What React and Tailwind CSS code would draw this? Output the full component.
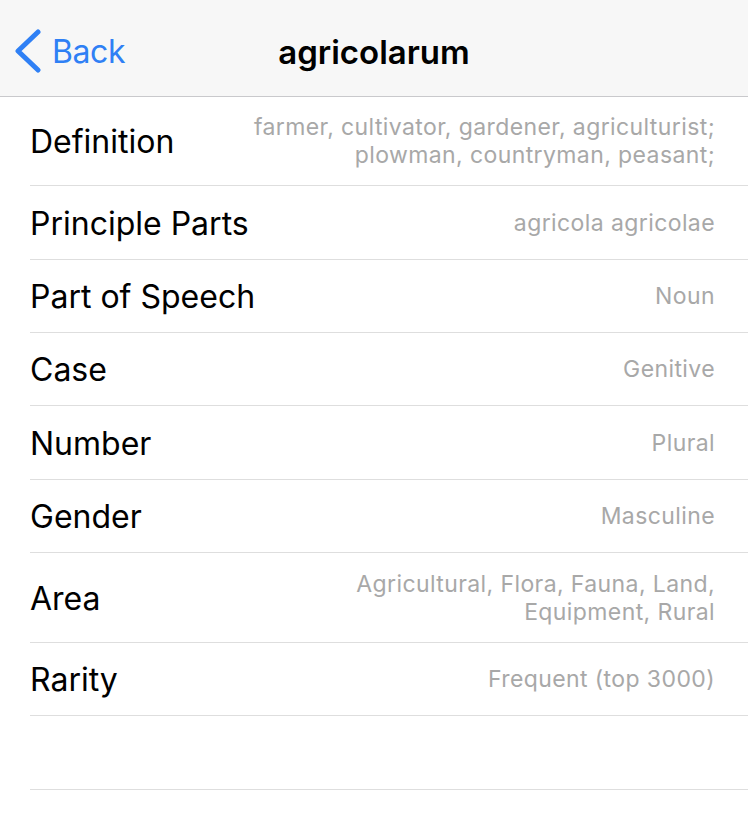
import React from "react";

const rows = [
  { label: "Definition", value: ["farmer, cultivator, gardener, agriculturist;", "plowman, countryman, peasant;"], h: "h-[89px]" },
  { label: "Principle Parts", value: ["agricola agricolae"], h: "h-[74px]" },
  { label: "Part of Speech", value: ["Noun"], h: "h-[73px]" },
  { label: "Case", value: ["Genitive"], h: "h-[73px]" },
  { label: "Number", value: ["Plural"], h: "h-[74px]" },
  { label: "Gender", value: ["Masculine"], h: "h-[73px]" },
  { label: "Area", value: ["Agricultural, Flora, Fauna, Land,", "Equipment, Rural"], h: "h-[90px]" },
  { label: "Rarity", value: ["Frequent (top 3000)"], h: "h-[73px]" },
  { label: "", value: [], h: "h-[74px]" },
];

export default function App() {
  return (
    <div className="w-[748px] h-[814px] bg-white overflow-hidden" style={{ fontFamily: "Inter, 'Noto Sans', sans-serif" }}>
      <div className="h-[97px] bg-[#f7f7f7] border-b border-[#c9c9cc] flex items-center relative">
        <div className="flex items-center pl-[14px] gap-[10px] text-[#2f80f5]">
          <svg width="28" height="44" viewBox="0 0 28 44" className="mt-[6px]">
            <path d="M24 3 L4 22 L24 41" fill="none" stroke="#2f80f5" strokeWidth="5" strokeLinecap="round" strokeLinejoin="round" />
          </svg>
          <span className="text-[32px] leading-none tracking-[-0.4px] mt-[8px]">Back</span>
        </div>
        <div className="absolute left-0 right-0 top-0 bottom-0 flex items-center justify-center pointer-events-none">
          <span className="text-[33px] font-semibold text-black leading-none mt-[8px] tracking-[0px]">agricolarum</span>
        </div>
      </div>
      <div className="pl-[30px]">
        {rows.map((r, i) => (
          <div key={i} className={`${r.h} border-b border-[#dedede] flex items-center justify-between pr-[33px]`}>
            <span className="text-[32px] text-black leading-none tracking-[0px] mt-[2px]">{r.label}</span>
            <div className="flex flex-col items-end text-[23px] leading-[28px] text-[#a8a8a8] tracking-[0.4px]">
              {r.value.map((v, j) => (
                <span key={j}>{v}</span>
              ))}
            </div>
          </div>
        ))}
      </div>
    </div>
  );
}
